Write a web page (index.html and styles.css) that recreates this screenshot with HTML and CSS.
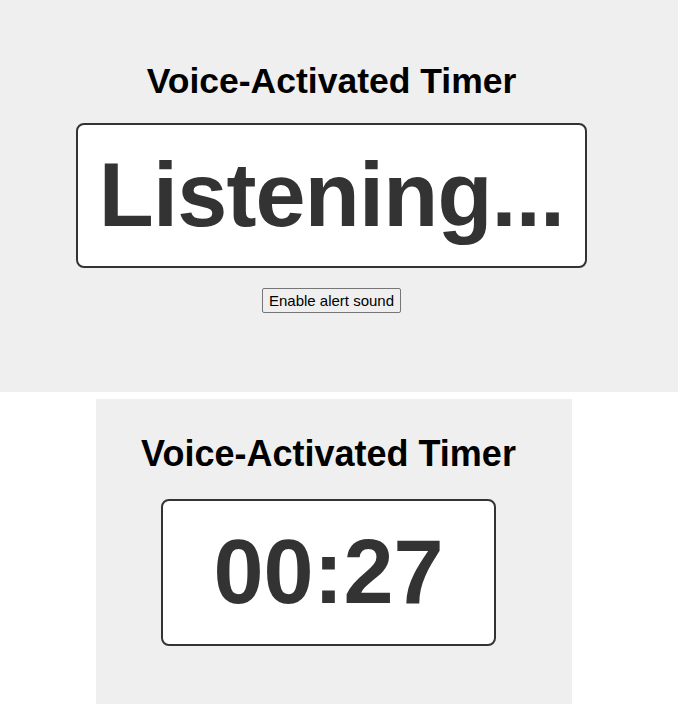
FILE: index.html
```html
<!DOCTYPE html>
<html lang="en">
<head>
<meta charset="utf-8">
<title>Voice-Activated Timer</title>
<link rel="stylesheet" href="styles.css">
</head>
<body>
  <section class="app app--full">
    <h1 class="app__title">Voice-Activated Timer</h1>
    <div class="display display--status">Listening...</div>
    <div class="app__actions">
      <button class="sound-btn" type="button">Enable alert sound</button>
    </div>
  </section>

  <section class="app app--panel">
    <h1 class="app__title app__title--panel">Voice-Activated Timer</h1>
    <div class="display display--time">00:27</div>
  </section>
</body>
</html>
```

FILE: styles.css
```css
html, body {
  margin: 0;
  padding: 0;
  background: #ffffff;
}

body {
  font-family: "Liberation Sans", Arial, Helvetica, sans-serif;
  color: #000;
}

.app {
  background: #efefef;
  text-align: center;
  box-sizing: border-box;
}

.app--full {
  padding: 61px 15px 79px 0;
}

.app--panel {
  width: 476px;
  margin: 7px 0 0 96px;
  padding: 34px 11px 58px 0;
}

.app__title {
  margin: 0 0 21px;
  font-size: 35.5px;
  font-weight: bold;
  line-height: normal;
  color: #000;
}

.app__title--panel {
  font-size: 36px;
  margin-bottom: 24px;
}

.display {
  display: inline-block;
  vertical-align: top;
  background: #fff;
  border: 2px solid #333;
  border-radius: 8px;
  color: #333;
  font-size: 90px;
  font-weight: bold;
  line-height: normal;
}

.display--status {
  padding: 19px 21px 19px;
  letter-spacing: -0.8px;
}

.display--time {
  padding: 20px 50px 20px;
}

.app__actions {
  margin-top: 20px;
  display: flex;
  justify-content: center;
}

.sound-btn {
  font-family: "Liberation Sans", Arial, sans-serif;
  font-size: 15px;
  line-height: normal;
  color: #000;
  background: #efefef;
  border: 1px solid #767676;
  border-radius: 2px;
  padding: 3px 6px;
  margin: 0;
}
```
